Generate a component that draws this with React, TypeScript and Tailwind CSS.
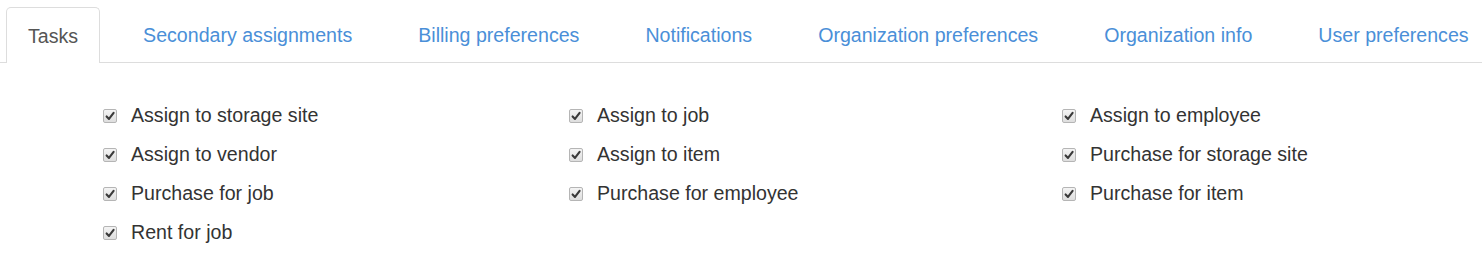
import React from "react";

const tabs = [
  "Tasks",
  "Secondary assignments",
  "Billing preferences",
  "Notifications",
  "Organization preferences",
  "Organization info",
  "User preferences",
];

const columns: string[][] = [
  ["Assign to storage site", "Assign to vendor", "Purchase for job", "Rent for job"],
  ["Assign to job", "Assign to item", "Purchase for employee"],
  ["Assign to employee", "Purchase for storage site", "Purchase for item"],
];

function Check() {
  return (
    <div className="w-[14px] h-[14px] rounded-[2px] border border-[#b5b5b5] bg-gradient-to-b from-[#f4f4f4] to-[#dedede] flex items-center justify-center shrink-0">
      <svg width="12" height="12" viewBox="0 0 12 12">
        <path d="M2.6 6.4 L5 8.9 L9.6 2.8" fill="none" stroke="#3a3a3a" strokeWidth="2.1" strokeLinecap="round" strokeLinejoin="round" />
      </svg>
    </div>
  );
}

export default function App() {
  return (
    <div className="w-[1482px] h-[256px] bg-white overflow-hidden" style={{ fontFamily: '"Liberation Sans", Arial, sans-serif' }}>
      <div className="flex items-end pt-[7px] pl-[6px] gap-[24px] border-b border-[#dddddd] h-[63px]">
        {tabs.map((t, i) =>
          i === 0 ? (
            <div
              key={t}
              className="h-[56px] -mb-px pl-[21px] pr-[21px] pt-[2px] -mr-[2px] flex items-center bg-white border border-b-0 border-[#dddddd] rounded-t-[5px] text-[19.6px] text-[#555555]"
            >
              {t}
            </div>
          ) : (
            <div key={t} className="h-[56px] -mb-px px-[21px] pt-[2px] flex items-center text-[19.6px] text-[#4a8fd8] whitespace-nowrap">
              {t}
            </div>
          )
        )}
      </div>
      <div className="grid grid-cols-[466px_493px_1fr] pl-[103px] pt-[33px]">
        {columns.map((col, ci) => (
          <div key={ci} className="flex flex-col">
            {col.map((item) => (
              <div key={item} className="h-[39px] flex items-center gap-[14px] text-[19.6px] text-[#333333] whitespace-nowrap">
                <Check />
                <span>{item}</span>
              </div>
            ))}
          </div>
        ))}
      </div>
    </div>
  );
}
